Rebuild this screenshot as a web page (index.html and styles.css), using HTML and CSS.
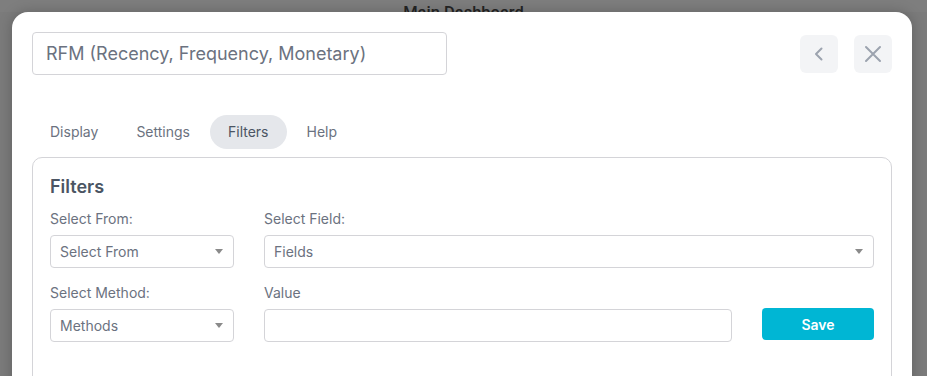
FILE: index.html
```html
<!DOCTYPE html>
<html>
<head>
<meta charset="utf-8">
<link rel="stylesheet" href="styles.css">
</head>
<body>
<header class="page-header"><span class="page-title">Main Dashboard</span></header>
<div class="overlay">
  <div class="modal">
    <div class="modal-head">
      <div class="title-input">RFM (Recency, Frequency, Monetary)</div>
      <div class="head-actions">
        <button class="icon-btn" aria-label="Back">
          <svg width="16" height="16" viewBox="0 0 16 16"><path d="M10.5 2.5 L5 8 L10.5 13.5" fill="none" stroke="#9ca3af" stroke-width="2" stroke-linecap="round" stroke-linejoin="round"/></svg>
        </button>
        <button class="icon-btn" aria-label="Close">
          <svg width="18" height="18" viewBox="0 0 18 18"><path d="M2 2 L16 16 M16 2 L2 16" fill="none" stroke="#9ca3af" stroke-width="2" stroke-linecap="round"/></svg>
        </button>
      </div>
    </div>
    <nav class="tabs">
      <span class="tab">Display</span>
      <span class="tab">Settings</span>
      <span class="tab active">Filters</span>
      <span class="tab">Help</span>
    </nav>
    <section class="panel">
      <h2 class="panel-title">Filters</h2>
      <div class="form-grid">
        <div class="field">
          <label class="label">Select From:</label>
          <div class="select"><span>Select From</span><i class="caret"></i></div>
        </div>
        <div class="field span2">
          <label class="label">Select Field:</label>
          <div class="select"><span>Fields</span><i class="caret"></i></div>
        </div>
        <div class="field">
          <label class="label">Select Method:</label>
          <div class="select"><span>Methods</span><i class="caret"></i></div>
        </div>
        <div class="field">
          <label class="label">Value</label>
          <div class="text-input"></div>
        </div>
        <div class="field bottom">
          <button class="save-btn">Save</button>
        </div>
      </div>
    </section>
  </div>
</div>
</body>
</html>
```
FILE: styles.css
```css
* { box-sizing: border-box; }
html, body {
  margin: 0;
  height: 100%;
  overflow: hidden;
}
body {
  background: #7b7b7b;
  font-family: Inter, "Noto Sans", sans-serif;
}
.page-header {
  height: 12px;
  background: #7e7e7e;
  display: flex;
  justify-content: center;
  overflow: visible;
}
.page-title {
  font-family: Roboto, "Liberation Sans", sans-serif;
  font-size: 16.5px;
  font-weight: 500;
  color: #242424;
  line-height: 20px;
  margin-top: 3px;
  height: 20px;
}
.overlay {
  position: absolute;
  left: 12px;
  top: 12px;
  width: 900px;
}
.modal {
  background: #fff;
  border-radius: 16px;
  padding: 20px 20px 40px 20px;
  box-shadow: 0 0 14px rgba(0,0,0,0.22);
  min-height: 420px;
}
.modal-head {
  display: flex;
  align-items: center;
  justify-content: space-between;
}
.title-input {
  width: 415px;
  height: 43px;
  border: 1px solid #d4d4d8;
  border-radius: 4px;
  padding: 0 13px;
  display: flex;
  align-items: center;
  font-size: 18px;
  color: #6b7280;
  font-weight: 400;
}
.head-actions {
  display: flex;
  gap: 16px;
  padding-top: 1px;
}
.icon-btn {
  width: 38px;
  height: 38px;
  border: none;
  border-radius: 6px;
  background: #f3f4f6;
  display: flex;
  align-items: center;
  justify-content: center;
  padding: 0;
}
.tabs {
  display: flex;
  gap: 2px;
  margin-top: 40px;
}
.tab {
  font-size: 14px;
  color: #6b7280;
  padding: 0 18px;
  height: 34px;
  line-height: 34px;
  border-radius: 17px;
}
.tab.active {
  background: #e5e7eb;
  color: #4b5563;
}
.panel {
  margin-top: 8px;
  border: 1px solid #d4d4d8;
  border-radius: 10px;
  padding: 17px 17px 30px 17px;
  min-height: 260px;
}
.panel-title {
  margin: 0;
  font-size: 18px;
  font-weight: 600;
  color: #4b5563;
  line-height: 24px;
}
.form-grid {
  margin-top: 10px;
  display: grid;
  grid-template-columns: 184px 1fr 112px;
  column-gap: 30px;
  row-gap: 15px;
}
.span2 { grid-column: span 2; }
.field {
  display: flex;
  flex-direction: column;
}
.field.bottom { justify-content: flex-end; }
.label {
  font-size: 14px;
  color: #6b7280;
  line-height: 20px;
  margin-bottom: 6px;
}
.select, .text-input {
  height: 33px;
  border: 1px solid #d4d4d8;
  border-radius: 4px;
  display: flex;
  align-items: center;
  justify-content: space-between;
  padding: 0 9px 0 9px;
  font-size: 14px;
  color: #6b7280;
}
.caret {
  width: 0;
  height: 0;
  border-left: 4px solid transparent;
  border-right: 4px solid transparent;
  border-top: 5px solid #8a8a8a;
  margin-right: 1px;
}
.save-btn {
  height: 32px;
  width: 112px;
  border: none;
  border-radius: 4px;
  background: #00b6d4;
  color: #fff;
  font-family: Inter, "Noto Sans", sans-serif;
  font-size: 14px;
  font-weight: 600;
  margin-bottom: 2px;
}
```
